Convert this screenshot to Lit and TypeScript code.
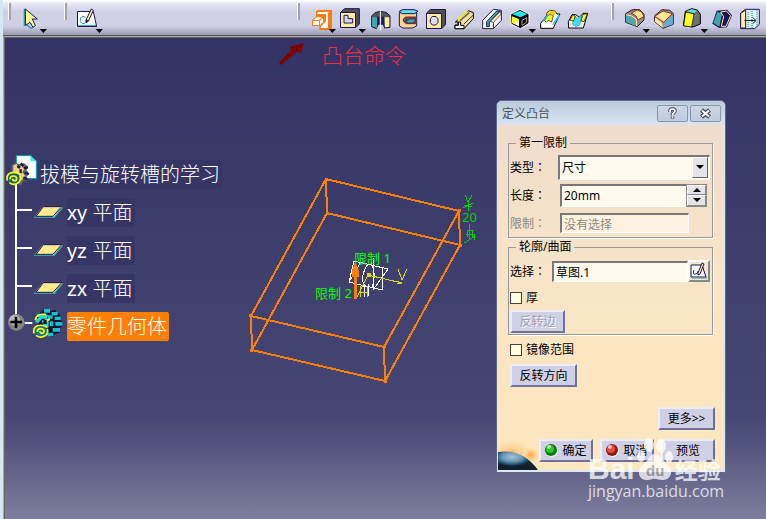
import { LitElement, html, svg, css, TemplateResult, SVGTemplateResult } from "lit";
import { customElement, property } from "lit/decorators.js";

interface Tool {
  label: string;
  origin: number;
  menu?: number;
  art: SVGTemplateResult;
}

const NAVY = "#1c1458";

// Icon art is drawn on a fine grid of three units per pixel.
const selectTools: Tool[] = [
  {
    label: "选择", origin: 57, menu: 130,
    art: svg`
      <path d="M73 26V76L80 74L92 84L99 84" fill="none" stroke="#2f9c9c" stroke-width="4"/>
      <path d="M76 27L112 57H97L106 77L99 82L90 67L77 76Z" fill="#ffff99" stroke=${NAVY} stroke-width="3"/>`,
  },
];
const sketchTools: Tool[] = [
  {
    label: "草图", origin: 222, menu: 298,
    art: svg`
      <path d="M236 90H290" stroke="#b4b4c4" stroke-width="5" stroke-dasharray="3 3"/>
      <path d="M232.500 34.500H280L290 79.500H232.500Z" fill="#fff" stroke=${NAVY} stroke-width="3"/>
      <path d="M235 76H288" stroke="#2f9c9c" stroke-width="3"/>
      <path d="M256 52L249 49L241 54V65L247 71L255 70" fill="none" stroke="#2f9c9c" stroke-width="3"/>
      <path d="M274 27L280 31L265 64L258 68V60Z" fill="#ffee99" stroke=${NAVY} stroke-width="3"/>
      <path d="M258 58L266 62L257 70Z" fill=${NAVY}/>`,
  },
];
const featureTools: Tool[] = [
  {
    label: "凸台", origin: 147, menu: 217,
    art: svg`
      <path d="M168 33L174 30H216V84L210 90H178V78H156V60L168 50Z" fill="#ff7a10"/>
      <path d="M174 36H207L201 42H171ZM204 42V84H183V79L198 64V42Z" fill="#fff"/>
      <path d="M160 60L170 52H186L177 60ZM159 63H177V75H159ZM180 62L189 54V66L180 75Z" fill="#fff"/>`,
  },
  {
    label: "凹槽", origin: 231, menu: 307,
    art: svg`
      <path d="M243 36L254 26H298V72L288 82H243Z" fill="#505050" stroke=${NAVY} stroke-width="3"/>
      <path d="M241.500 37.500H286.500V82.500H241.500Z" fill="#ffee99" stroke=${NAVY} stroke-width="3"/>
      <path d="M252 46H264V56H278V69H252Z" fill="#dcdcee" stroke=${NAVY} stroke-width="3"/>`,
  },
  {
    label: "旋转体", origin: 315,
    art: svg`
      <path d="M336 88H400" stroke="#b4b4c4" stroke-width="5" stroke-dasharray="3 3"/>
      <path d="M335 48L345 38L360 34L378 37L390 47V82L374 84L369 72H355L349 86L335 80Z" fill="#555" stroke=${NAVY} stroke-width="3"/>
      <path d="M336 52H351V84L336 79Z" fill="#3fa8a8"/>
      <path d="M374 52H388V80L375 82Z" fill="#ffee99"/>
      <path d="M355 50V74M368 50V74" stroke=${NAVY} stroke-width="7"/>
      <path d="M361 27V92" stroke="#fff" stroke-width="3"/>`,
  },
  {
    label: "旋转槽", origin: 399,
    art: svg`
      <path d="M418 90H480" stroke="#b4b4c4" stroke-width="5" stroke-dasharray="3 3"/>
      <path d="M418 38H470V78L458 84H429L418 78Z" fill="#f8d890" stroke=${NAVY} stroke-width="3"/>
      <path d="M418 34L427 29H463L474 34L464 41H427Z" fill="#66dff5" stroke=${NAVY} stroke-width="3"/>
      <path d="M470 51H437L430 57V64L439 71H470" fill="#555" stroke="#a01820" stroke-width="3"/>
      <path d="M437 64L448 57H468L460 69H444Z" fill="#3fa8a8" stroke=${NAVY} stroke-width="2"/>`,
  },
  {
    label: "孔", origin: 483,
    art: svg`
      <path d="M502 90H564" stroke="#b4b4c4" stroke-width="5" stroke-dasharray="3 3"/>
      <path d="M500 39L511 28.500H556.500V74L546 85H500Z" fill="#505050" stroke=${NAVY} stroke-width="3"/>
      <path d="M499.500 40.500H544.500V85.500H499.500Z" fill="#ffee99" stroke=${NAVY} stroke-width="3"/>
      <path d="M517 49.500H528L534 56V68L527 75H517L511 68V56Z" fill="#dcdcee" stroke=${NAVY} stroke-width="3"/>`,
  },
  {
    label: "肋", origin: 567,
    art: svg`
      <path d="M588 91H646" stroke="#b4b4c4" stroke-width="5" stroke-dasharray="3 3"/>
      <path d="M586 66L625 32L640 38V56L612 86H585V75H594V66Z" fill="#f3dfa0" stroke="#000" stroke-width="3"/>
      <path d="M600 62L628 38" stroke="#666" stroke-width="5"/>
      <path d="M612 72L639 46" stroke="#333" stroke-width="3"/>
      <path d="M594 59L622 34" stroke="#ffff00" stroke-width="4"/>
      <path d="M585 76H595V66H602V76H612V86H585Z" fill="#fff" stroke="#000" stroke-width="3"/>`,
  },
  {
    label: "开槽", origin: 651,
    art: svg`
      <path d="M672 91H730" stroke="#b4b4c4" stroke-width="5" stroke-dasharray="3 3"/>
      <path d="M668 61L700 28L724 31V61L700 86H668Z" fill="#fff" stroke=${NAVY} stroke-width="3"/>
      <path d="M680 65L710 33H720L688 67V80H680Z" fill="#3fa8a8" stroke=${NAVY} stroke-width="3"/>
      <path d="M692 63L722 33V44L700 68Z" fill="#ffee99" stroke=${NAVY} stroke-width="2"/>
      <path d="M700 68V86" stroke=${NAVY} stroke-width="3"/>`,
  },
  {
    label: "加强肋", origin: -15, menu: 67,
    art: svg`
      <path d="M2 42L30 28L57 42V70L31 86L3 72Z" fill="#000" stroke="#fff" stroke-width="3"/>
      <path d="M6 42L30 32L52 42L31 52Z" fill="#22e5ee"/>
      <path d="M6 49L27 57V79L6 69Z" fill="#ffff22"/>
      <path d="M36 61L50 53V67L36 76Z" fill="#000" stroke="#ffffc0" stroke-width="2"/>
      <path d="M18 67H27V79L18 74Z" fill="#fff"/>`,
  },
  {
    label: "多截面实体", origin: 69,
    art: svg`
      <path d="M92 90H152" stroke="#b4b4c4" stroke-width="5" stroke-dasharray="3 3"/>
      <path d="M92 70L110 47L112 37L121 31L134 33L141 42H150L134 75L130 85H92Z" fill="#fff" stroke="#000" stroke-width="3"/>
      <path d="M104 62L113 47L121 43L130 47L125 66L115 61L109 67Z" fill="#ffff20" stroke="#000" stroke-width="2"/>
      <path d="M110 42L118 32H132L139 39L134 46L123 42Z" fill="#f4d400"/>
      <path d="M99 64L112 48M148 45L129 74" stroke="#22c8ea" stroke-width="5"/>`,
  },
  {
    label: "已移除的多截面实体", origin: 153,
    art: svg`
      <path d="M178 90H234" stroke="#b4b4c4" stroke-width="5" stroke-dasharray="3 3"/>
      <path d="M175 65L186 44H197L208 52L219 40H233L220 84H176Z" fill="#fff" stroke="#000" stroke-width="3"/>
      <path d="M188 65L195 49L203 56L216 43L209 75L198 80L188 74Z" fill="#48dcf5" stroke="#168bb0" stroke-width="2"/>
      <path d="M180 61L188 45L196 48L191 63ZM213 63L219 43L232 41L222 65Z" fill="#ffff20" stroke="#000" stroke-width="2"/>`,
  },
];
const dressTools: Tool[] = [
  {
    label: "倒圆角", origin: 327, menu: 409,
    art: svg`
      <path d="M350 83H406" stroke="#b4b4c4" stroke-width="5" stroke-dasharray="3 3"/>
      <path d="M347 41L367 29H389L402 43V60L382 80L347 67Z" fill="#8c8c8c" stroke="#222" stroke-width="3"/>
      <path d="M348 46L364 50L376 58V77L348 66Z" fill="#4fa8a8"/>
      <path d="M364 39L382 30L394 35L402 49L384 60L378 48Z" fill="#ffe890" stroke="#b02020" stroke-width="3"/>
      <path d="M348 44L365 48L379 58V78" fill="none" stroke="#ffee99" stroke-width="3"/>`,
  },
  {
    label: "倒角", origin: 414,
    art: svg`
      <path d="M438 89H494" stroke="#b4b4c4" stroke-width="5" stroke-dasharray="3 3"/>
      <path d="M434 47L456 29L480 31L490 41V73L459 85L434 65Z" fill="#999" stroke="#222" stroke-width="3"/>
      <path d="M466 65L489 47V73L463 82Z" fill="#60b0d8"/>
      <path d="M435 52L456 68L458 83L435 65Z" fill="#ffe8a0"/>
      <path d="M434 49L459 33L487 41L461 67Z" fill="#ffe890" stroke="#b02020" stroke-width="3"/>`,
  },
  {
    label: "拔模", origin: 501, menu: 583,
    art: svg`
      <path d="M526 89H580" stroke="#b4b4c4" stroke-width="5" stroke-dasharray="3 3"/>
      <path d="M526 34L545 26L562 30L571 43V72L549 81L520 77Z" fill="#707070" stroke="#000" stroke-width="3"/>
      <path d="M527 37L552 41L545 81L521 77Z" fill="#ffff20" stroke="#000" stroke-width="2"/>
      <path d="M529 34L545 28L562 32L552 39Z" fill="#50e5f5"/>`,
  },
  {
    label: "抽壳", origin: 588,
    art: svg`
      <path d="M613 89H660" stroke="#b4b4c4" stroke-width="5" stroke-dasharray="3 3"/>
      <path d="M607 71L620 32L651 29L666 46L651 82L627 84Z" fill=${NAVY}/>
      <path d="M610 69L622 35L636 41L628 80Z" fill="#3fa8a8"/>
      <path d="M632 36L649 33L662 47L648 79H634L641 50Z" fill="none" stroke="#ffee99" stroke-width="3"/>`,
  },
  {
    label: "厚度", origin: 675,
    art: svg`
      <path d="M695 91H750" stroke="#b4b4c4" stroke-width="5" stroke-dasharray="3 3"/>
      <path d="M692 39L706 28H748V73L734 86H692Z" fill="#e4f2f4" stroke=${NAVY} stroke-width="3"/>
      <path d="M692 40L707 30V84H692Z" fill="#ffee99" stroke=${NAVY} stroke-width="3"/>
      <path d="M715 36V83M726 33V83M741 31V78" stroke="#60b8be" stroke-width="6" stroke-dasharray="3 3"/>
      <path d="M703 61.500H737M728 52L738 61.500L728 71" fill="none" stroke=${NAVY} stroke-width="3"/>`,
  },
];

@customElement("tool-bar")
class ToolBar extends LitElement {
  static styles = css`
    :host {
      display: flex;
      flex: none;
      height: 35px;
      padding-left: 5px;
      border-bottom: 1px solid #55555c;
      background: linear-gradient(#fff 0, #e6e6f3 4px, #cfcfe6 12px, #cfcfe6 26px, #a6a6bc 33px, #9c9cb0 100%);
    }
    .group { display: flex; flex: none; }
    .group::before {
      content: "";
      width: 1px;
      height: 17px;
      margin-top: 3px;
      background: #fff;
      border-right: 2px solid #a2a2ac;
    }
    .select { width: 56px; --lead: 8px; }
    .sketch { width: 233px; --lead: 7px; }
    .feature { width: 314px; --lead: 9px; }
    .dress { --lead: 5px; --pitch: 29px; }
    button {
      width: var(--pitch, 28px);
      height: 34px;
      padding: 0;
      border: 0;
      background: none;
      text-align: left;
    }
    button:first-child { margin-left: var(--lead); }
    svg { display: block; overflow: visible; }
  `;

  private group(name: string, tools: Tool[]) {
    return html`<div class="group ${name}">
      ${tools.map((t) => html`<button aria-label=${t.label} title=${t.label}>
        <svg width="28" height="34" viewBox="${t.origin} 0 84 102">
          ${t.art}
          ${t.menu === undefined ? "" : svg`<path d="M${t.menu - 11} 87h22l-11 12z" fill="#000"/>`}
        </svg>
      </button>`)}
    </div>`;
  }

  render() {
    return html`
      ${this.group("select", selectTools)}
      ${this.group("sketch", sketchTools)}
      ${this.group("feature", featureTools)}
      ${this.group("dress", dressTools)}
    `;
  }
}

@customElement("spec-tree")
class SpecTree extends LitElement {
  static styles = css`
    :host {
      display: block;
      padding: 118px 0 0 1px;
      color: #fff;
      font: 300 20px/31px "Liberation Sans", "Noto Sans CJK SC", sans-serif;
    }
    ul { list-style: none; margin: 0; padding: 0; }
    li { display: flex; align-items: center; height: 38px; }
    svg { display: block; flex: none; }
    .label { height: 29px; padding-right: 2px; background: #353566; white-space: nowrap; border-radius: 2px; }
    .active { background: #ff8000; }
  `;

  private plane(name: string) {
    return html`<li>
      <svg width="62" height="38" viewBox="15 159 186 114">
        <path d="M48 159V273M48 210H96" stroke="#fff" stroke-width="6"/>
        <path d="M104 231L128 200H188L163 231Z" fill="#ffea8c"/>
        <path d="M109 228L130 200H188" fill="none" stroke="#1c1458" stroke-width="3"/>
        <path d="M188 202L163 232H102" fill="none" stroke="#2fa0a8" stroke-width="4"/>
        <path d="M183 202L159 229H106" fill="none" stroke="#1c1458" stroke-width="3"/>
      </svg>
      <span class="label">${name}</span>
    </li>`;
  }

  render(): TemplateResult {
    return html`<ul>
      <li>
        <svg width="35" height="38" viewBox="15 45 105 114">
          <path d="M48 132V159" stroke="#fff" stroke-width="6"/>
          <path d="M49 47H92L109 63V116H49Z" fill="#fff" stroke="#00a0b0" stroke-width="3"/>
          <path d="M90 47L109 64H92Z" fill="#40e8f0"/>
          <path d="M34 76L48 69L61 73L72 69L84 80L80 91L88 101L80 110L82 122L69 124L64 136L50 130L36 112Z" fill="#666"/>
          <path d="M40 76L50 72L55 81L66 78L72 88L67 97L76 108L66 120L54 112L40 96Z" fill="#e8d488"/>
          <path d="M62 70L70 78M72 84L84 82M74 98L86 102M70 112L82 118M62 88V100M52 78L60 84" stroke="#1c1850" stroke-width="7"/>
          <circle cx="41" cy="115" r="19" fill="#16607c"/>
          <path d="M22 122C16 98 40 92 60 102M60 108C66 128 44 140 28 128M30 118C30 104 50 106 50 116C50 124 38 124 38 116" fill="none" stroke="#ffff00" stroke-width="5"/>
        </svg>
        <span class="label">拔模与旋转槽的学习</span>
      </li>
      ${this.plane("xy 平面")} ${this.plane("yz 平面")} ${this.plane("zx 平面")}
      <li>
        <svg width="62" height="38" viewBox="15 501 186 114">
          <path d="M48 501V530M74 549H97" stroke="#fff" stroke-width="6"/>
          <circle cx="49" cy="547" r="25" fill="#858585"/>
          <circle cx="44" cy="540" r="16" fill="#b8b8b8"/>
          <path d="M48 530V564M31 546H66" stroke="#000" stroke-width="8"/>
          <path d="M107 524L120 520L131 507L145 505L150 513L166 510L172 520L181 524L179 538L187 545V560L178 564L179 578L164 582L158 591L140 586L118 560Z" fill="#101030"/>
          <path d="M132 506H150V518H132ZM110 521H128V531H110ZM155 516H173V526H155ZM164 530H182V540H164ZM166 546H187V557H166ZM158 564H180V575H158ZM142 578H160V589H142ZM144 526H158V536H144ZM150 544H160V558H150Z" fill="#10c4cc"/>
          <path d="M118 530L132 520L144 526L140 536L126 536L114 550L104 544ZM126 542L146 534V562L132 566Z" fill="#20d8e0"/>
          <path d="M106 540C108 526 122 520 138 524M128 544L150 538" fill="none" stroke="#ffff00" stroke-width="5"/>
          <path d="M130 540H140V552H130Z" fill="#101030"/>
          <circle cx="122" cy="573" r="19" fill="#087890"/>
          <path d="M102 580C96 556 122 550 142 562M142 566C148 586 126 598 108 586M112 576C112 562 132 564 132 574C132 582 120 582 120 574" fill="none" stroke="#ffff00" stroke-width="5"/>
        </svg>
        <span class="label active">零件几何体</span>
      </li>
    </ul>`;
  }
}

@customElement("model-scene")
class ModelScene extends LitElement {
  static styles = css`
    :host { display: block; position: absolute; left: 236px; top: 3px; }
    svg { display: block; }
    .wire { fill: none; stroke: #ff8000; stroke-width: 2; shape-rendering: crispEdges; }
    .sketch { fill: none; stroke: #fff; stroke-width: 1; shape-rendering: crispEdges; }
    .axis { fill: none; stroke: #d8d800; stroke-width: 1; shape-rendering: crispEdges; }
    .dim { fill: none; stroke: #00d000; stroke-width: 1; shape-rendering: crispEdges; }
    text { font-family: "Noto Sans", "Noto Sans CJK SC", sans-serif; font-size: 13px; fill: #00ff00; }
    .note { font-size: 21px; font-weight: 300; fill: #f03040; }
    .dimension { fill: #00d000; }
  `;

  render() {
    return html`<svg width="250" height="350" viewBox="240 40 250 350">
      <path d="M304 43L301 53L298 51L281 65L279 63L292 49L289 47Z" fill="#800000"/>
      <text class="note" x="322" y="63">凸台命令</text>
      <path class="wire" d="M326 179L459 211L460 245L327 213ZM251 316L384 347L385 381L252 350ZM326 179L251 316M459 211L384 347M460 245L385 381M327 213L252 350"/>
      <path d="M325 178h3v3h-3zM458 209h3v3h-3zM459 244h3v3h-3zM326 212h3v3h-3zM249 314h3v3h-3zM383 345h3v3h-3zM384 380h3v3h-3zM250 349h3v3h-3z" fill="#ff8000"/>
      <path class="sketch" d="M354 261L388 269L373 290M354 261L349 282L382 290L383 267M374 258L373 290M368 264Q360 274 364 287M371 262Q377 275 372 288M364 284V297M368 284V296M349 282L361 262"/>
      <text x="354" y="263">限制 1</text>
      <text x="315" y="298">限制 2</text>
      <path class="axis" d="M356 299L368 275L402 283M396 281L402 283L397 284M398 269L402 280L407 269M360 286V297M367 286V297M360 292H367"/>
      <path d="M367 273h4v4h-4z" fill="#d8d800"/>
      <path d="M352 277V271L355 262L359 271V277H357V299H354V277Z" fill="#ff8000"/>
      <text class="dimension" x="462" y="222">20</text>
      <path class="dim" d="M465 195L468 202L472 195M468 202V211M463 208L473 203M464 205L472 207M469 224V237M467 237V230H472V237M464 243L474 237M466 234H474V240M469 230V240"/>
    </svg>`;
  }
}

@customElement("pad-dialog")
class PadDialog extends LitElement {
  static styles = css`
    :host {
      display: flex;
      flex-direction: column;
      box-sizing: border-box;
      position: absolute;
      left: 492px;
      top: 63px;
      width: 230px;
      border: 1px solid #60688a;
      border-radius: 6px 6px 0 0;
      background: #dbe7f2;
      font: 12px/16px "Noto Sans", "Noto Sans CJK SC", sans-serif;
      color: #000;
    }
    * { box-sizing: border-box; }
    input, select, button { font: inherit; color: inherit; margin: 0; padding: 0; border-radius: 0; }
    header {
      display: flex;
      align-items: center;
      gap: 2px;
      height: 24px;
      padding: 1px 4px 0 5px;
      border-radius: 5px 5px 0 0;
      background: linear-gradient(#bccbdc, #d8e4f0);
    }
    h2 { flex: 1; margin: 0; font: inherit; color: #4a5260; }
    .caption {
      width: 31px;
      height: 17px;
      border: 1px solid #8895ad;
      border-radius: 2px;
      background: linear-gradient(#ccd7e5, #bfccde);
    }
    .caption svg { display: block; margin: 0 auto; }
    .body {
      display: flex;
      flex-direction: column;
      margin: 0 2px 2px 1px;
      padding: 10px 8px 8px 10px;
      background: linear-gradient(#f0dccb, #f6e3c8 35%, #fce6c1 70%, #fde7c0);
      position: relative;
    }
    fieldset {
      display: flex;
      flex-direction: column;
      min-width: 0;
      margin: 0 2px 0 0;
      padding: 2px 2px 0 1px;
      border: 1px solid #999;
      box-shadow: 1px 1px #fff;
    }
    legend { margin-left: 6px; padding: 0 3px; }
    .profile { margin-top: 1px; padding-bottom: 1px; }
    .row { display: flex; align-items: center; height: 28px; }
    .row label { flex: none; width: 50px; }
    .row .short { width: 42px; }
    .colon { font-family: "Noto Sans CJK TC", sans-serif; }
    .sunken {
      border: solid;
      border-width: 2px 1px 1px 2px;
      border-color: #777 #fff #fff #777;
      background: #fffaee;
      padding-left: 2px;
    }
    .combo { display: flex; flex: 1; height: 25px; margin-left: -2px; position: relative; }
    select { flex: 1; appearance: none; height: 25px; }
    .drop {
      position: absolute;
      right: 2px;
      top: 2px;
      width: 16px;
      height: 21px;
      border: 1px solid;
      border-color: #fff #666 #666 #fff;
      background: #e4e4e8;
      pointer-events: none;
    }
    .drop svg { display: block; margin: 7px auto 0; }
    .spin { display: flex; flex: 1; min-width: 0; height: 23px; margin-right: 3px; }
    .spin input { flex: 1; min-width: 0; border-right: 0; }
    .arrows { display: flex; flex: none; flex-direction: column; width: 21px; border: 1px solid #888; }
    .arrows button { flex: 1; border: 1px solid; border-color: #fff #888 #888 #fff; background: #e4e4e8; }
    .arrows svg { display: block; margin: 0 auto; }
    .row.off { color: #8d8880; }
    .off input { width: 129px; height: 20px; background: #fdf2e2; }
    .pick { flex: 1; min-width: 0; height: 21px; }
    .tick { display: flex; align-items: center; gap: 4px; height: 25px; }
    .tick input {
      appearance: none;
      width: 12px;
      height: 12px;
      border: 1px solid #444;
      background: #ffffdf;
    }
    .push {
      display: flex;
      align-items: center;
      justify-content: center;
      gap: 4px;
      height: 23px;
      border: 2px solid;
      border-color: #ededfa #70709a #70709a #ededfa;
      background: #cfcfe6;
      white-space: nowrap;
    }
    .edit { width: 22px; height: 22px; background: #f5e6d2; border-color: #fff #888 #888 #fff; }
    .side { width: 55px; }
    .side:disabled { color: #9e9eae; text-shadow: 1px 1px #fff; }
    .mirror { margin: 2px 0 0 2px; }
    .flip { width: 67px; margin: 2px 0 0 2px; }
    .more { width: 57px; align-self: flex-end; margin: 20px 0 9px; }
    footer { display: flex; justify-content: flex-end; gap: 7px; }
    footer .push { width: 54px; }
    .planet { position: absolute; left: 0; bottom: 0; }
  `;

  @property() length = "20mm";

  private ball(light: string, dark: string) {
    return html`<svg width="13" height="13" viewBox="0 0 13 13">
      <circle cx="7" cy="7" r="6" fill="#f4f4fa"/><circle cx="6" cy="6" r="6" fill=${dark}/>
      <circle cx="5" cy="5" r="4" fill=${light}/><circle cx="4" cy="3" r="2" fill="#fff" opacity=".7"/>
    </svg>`;
  }

  render() {
    const colon = html`<span class="colon">：</span>`;
    return html`
      <header>
        <h2>定义凸台</h2>
        <button class="caption" aria-label="帮助"><svg width="11" height="13" viewBox="0 0 11 13">
          <path d="M3 5V4Q3 2 5.500 2T8 4Q8 5 6.500 6T5.500 8M5.500 9.500V11.500" fill="none" stroke="#454c5c" stroke-width="3.600"/>
          <path d="M3 5V4Q3 2 5.500 2T8 4Q8 5 6.500 6T5.500 8M5.500 9.500V11" fill="none" stroke="#fff" stroke-width="1.600"/>
        </svg></button>
        <button class="caption" aria-label="关闭"><svg width="13" height="11" viewBox="0 0 13 11">
          <path d="M2.500 2L10.500 9M10.500 2L2.500 9" stroke="#454c5c" stroke-width="4.400"/>
          <path d="M3 2.500L10 8.500M10 2.500L3 8.500" stroke="#fff" stroke-width="2"/>
        </svg></button>
      </header>
      <div class="body">
        <svg class="planet" width="48" height="34" viewBox="0 0 48 34">
          <defs>
            <radialGradient id="glow"><stop offset="0" stop-color="#ff9d38"/><stop offset=".5" stop-color="#ffb860" stop-opacity=".6"/><stop offset="1" stop-color="#fdd898" stop-opacity="0"/></radialGradient>
            <radialGradient id="globe" cx=".35" cy=".3"><stop offset="0" stop-color="#a8c4d4"/><stop offset=".5" stop-color="#6898b4"/><stop offset=".8" stop-color="#245070"/><stop offset="1" stop-color="#12202c"/></radialGradient>
          </defs>
          <ellipse cx="14" cy="18" rx="22" ry="16" fill="url(#glow)" opacity=".6"/>
          <circle cx="33" cy="19" r="8" fill="url(#glow)"/>
          <path d="M0 16Q24 12 40 34H0Z" fill="url(#globe)"/>
        </svg>
        <fieldset>
          <legend>第一限制</legend>
          <div class="row">
            <label for="kind">类型${colon}</label>
            <div class="combo">
              <select id="kind" class="sunken"><option>尺寸</option></select>
              <span class="drop"><svg width="8" height="4" viewBox="0 0 8 4"><path d="M0 0H8L4 4Z"/></svg></span>
            </div>
          </div>
          <div class="row">
            <label for="length">长度${colon}</label>
            <div class="spin">
              <input id="length" class="sunken" .value=${this.length}>
              <div class="arrows">
                <button aria-label="增加"><svg width="8" height="4" viewBox="0 0 8 4"><path d="M0 4H8L4 0Z"/></svg></button>
                <button aria-label="减少"><svg width="8" height="4" viewBox="0 0 8 4"><path d="M0 0H8L4 4Z"/></svg></button>
              </div>
            </div>
          </div>
          <div class="row off">
            <label for="limit">限制${colon}</label>
            <input id="limit" class="sunken" value="没有选择" disabled>
          </div>
        </fieldset>
        <fieldset class="profile">
          <legend>轮廓/曲面</legend>
          <div class="row">
            <label class="short" for="profile">选择${colon}</label>
            <input id="profile" class="sunken pick" value="草图.1">
            <button class="push edit" aria-label="编辑草图"><svg width="18" height="18" viewBox="0 0 18 18">
              <path d="M1 3H12L16 15H1Z" fill="#fff" stroke="#1c1458"/>
              <path d="M2 16H17" stroke="#2f9c9c"/>
              <path d="M4 8Q2 13 6 12Q8 11 8 9" fill="none" stroke="#1c1458"/>
              <path d="M12 1L14 2L10 12L8 13V11Z" fill="#ffee99" stroke="#1c1458"/>
            </svg></button>
          </div>
          <label class="tick"><input type="checkbox">厚</label>
          <button class="push side" disabled>反转边</button>
        </fieldset>
        <label class="tick mirror"><input type="checkbox">镜像范围</label>
        <button class="push flip">反转方向</button>
        <button class="push more">更多&gt;&gt;</button>
        <footer>
          <button class="push">${this.ball("#28c828", "#087808")}确定</button>
          <button class="push">${this.ball("#f04838", "#901818")}取消</button>
          <button class="push">预览</button>
        </footer>
      </div>
    `;
  }
}

@customElement("site-mark")
class SiteMark extends LitElement {
  static styles = css`
    :host {
      position: absolute;
      right: 42px;
      bottom: 19px;
      width: 136px;
      color: #fff;
      opacity: .75;
      pointer-events: none;
      white-space: nowrap;
    }
    .brand { display: flex; align-items: flex-end; height: 43px; padding-bottom: 3px; }
    .latin { font: bold 30px/22px "Liberation Sans", sans-serif; }
    .han { font: bold 23px/22px "Noto Sans CJK SC", sans-serif; }
    svg { display: block; margin: 0 1px; }
    .du { font: bold 15px "Liberation Sans", sans-serif; fill: #a09c9c; }
    .url { font: 16px/17px "Open Sans", "Noto Sans", sans-serif; }
  `;

  render() {
    return html`
      <div class="brand">
        <span class="latin">Bai</span>
        <svg width="38" height="43" viewBox="0 0 38 43" fill="#fff">
          <ellipse cx="13" cy="8" rx="5" ry="7"/><ellipse cx="25" cy="9" rx="5" ry="7"/>
          <ellipse cx="5" cy="19" rx="4" ry="6"/><ellipse cx="33" cy="20" rx="4" ry="6"/>
          <path d="M19 17C25 17 27 24 33 29C38 35 34 43 27 43C22 43 20 41 16 42C8 45 2 41 3 34C4 28 10 27 13 21Q15 17 19 17Z"/>
          <text class="du" x="10" y="39">du</text>
        </svg>
        <span class="han">经验</span>
      </div>
      <div class="url">jingyan.baidu.com</div>
    `;
  }
}

@customElement("app-root")
class AppRoot extends LitElement {
  static styles = css`
    :host {
      display: flex;
      flex-direction: column;
      box-sizing: border-box;
      min-height: 100vh;
      border-left: 3px solid #d6e6f3;
      overflow: hidden;
    }
    main {
      flex: 1;
      position: relative;
      border: solid #a8a8a8;
      border-width: 1px 0 0 1px;
      box-shadow: inset 1px 1px #666;
      background: linear-gradient(#333366, #3d3d6c 40%, #474775 79%, #52527e 84%, #7e7e9e);
    }
  `;

  render() {
    return html`
      <tool-bar></tool-bar>
      <main>
        <spec-tree></spec-tree>
        <model-scene></model-scene>
        <pad-dialog></pad-dialog>
        <site-mark></site-mark>
      </main>
    `;
  }
}
